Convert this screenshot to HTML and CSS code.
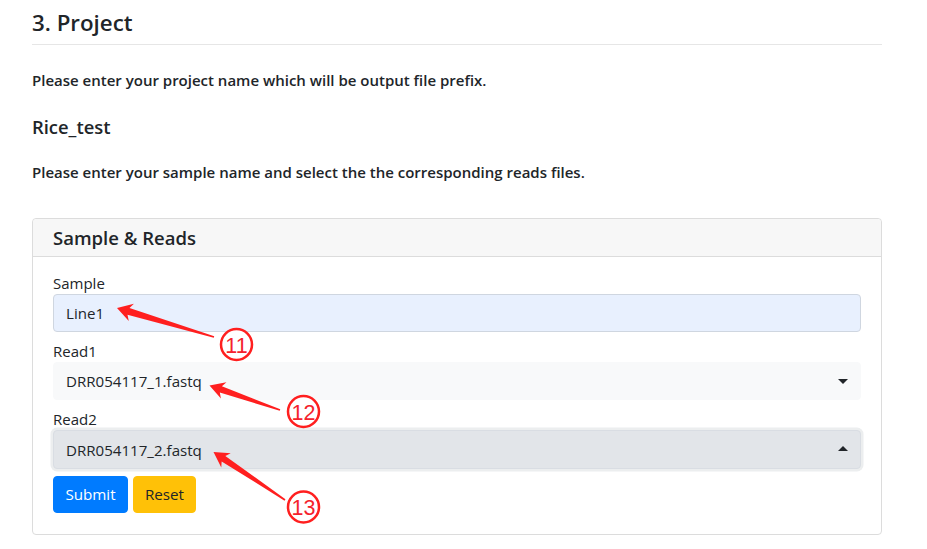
FILE: index.html
```html
<!DOCTYPE html>
<html lang="en">
<head>
<meta charset="utf-8">
<title>Project</title>
<link rel="stylesheet" href="styles.css">
</head>
<body>
<div class="page">
  <h3 class="section-title">3. Project</h3>
  <p class="note">Please enter your project name which will be output file prefix.</p>
  <h5 class="project-name">Rice_test</h5>
  <p class="note note-2">Please enter your sample name and select the the corresponding reads files.</p>

  <div class="card">
    <div class="card-header">Sample &amp; Reads</div>
    <form class="card-body">
      <label class="field-label" for="sample">Sample</label>
      <input class="input autofill" id="sample" type="text" value="Line1">

      <label class="field-label" for="read1">Read1</label>
      <div class="select-wrap">
        <select class="select" id="read1"><option>DRR054117_1.fastq</option></select>
        <span class="caret caret-down"></span>
      </div>

      <label class="field-label" for="read2">Read2</label>
      <div class="select-wrap focused">
        <select class="select select-open" id="read2"><option>DRR054117_2.fastq</option></select>
        <span class="caret caret-up"></span>
      </div>

      <div class="actions">
        <button type="button" class="btn btn-primary">Submit</button>
        <button type="button" class="btn btn-warning">Reset</button>
      </div>
    </form>
  </div>
</div>

<svg class="annotations" width="927" height="549" viewBox="0 0 927 549" xmlns="http://www.w3.org/2000/svg">
  <g fill="#ff1f1f">
    <polygon points="214.23,336.23 129.50,308.09 133.95,303.68 117,308 128.79,320.92 127.50,314.79 213.77,337.77"/>
    <polygon points="280.26,409.24 221.89,386.37 226.45,382.34 209.5,385.5 220.93,398.42 219.81,392.43 279.74,410.76"/>
    <polygon points="285.44,499.33 225.32,455.90 230.70,453.23 213.5,452 221.28,467.39 221.66,461.40 284.56,500.67"/>
  </g>
  <g fill="#ffffff" stroke="#ff1f1f" stroke-width="2.5">
    <circle cx="236.5" cy="344.5" r="15.5"/>
    <circle cx="303.5" cy="411.5" r="15.5"/>
    <circle cx="303.5" cy="507" r="15.5"/>
  </g>
  <g class="num" fill="#f5222d" text-anchor="middle">
    <text x="236.5" y="352.5">11</text>
    <text x="303.5" y="419.5">12</text>
    <text x="303.5" y="515">13</text>
  </g>
</svg>
</body>
</html>
```

FILE: styles.css
```css
* { box-sizing: border-box; }

html, body {
  margin: 0;
  padding: 0;
  background: #ffffff;
}

body {
  font-family: "Open Sans", "Noto Sans", sans-serif;
  color: #212529;
  width: 927px;
  height: 549px;
  overflow: hidden;
  position: relative;
}

.page {
  width: 850px;
  margin-left: 32px;
  padding-top: 6px;
}

.section-title {
  margin: 0;
  font-size: 22.3px;
  font-weight: 600;
  line-height: 34px;
  padding-bottom: 4px;
  border-bottom: 1px solid #e6e6e6;
}

.note {
  margin: 23px 0 0 0;
  font-size: 15px;
  font-weight: 600;
  line-height: 24px;
}

.project-name {
  margin: 21px 0 0 0;
  font-size: 18.4px;
  font-weight: 600;
  line-height: 28px;
}

.note-2 { margin-top: 19px; }

.card {
  margin-top: 34px;
  border: 1px solid #dcdcdc;
  border-radius: 4px;
  width: 850px;
}

.card-header {
  height: 38px;
  background: #f7f7f7;
  border-bottom: 1px solid #dcdcdc;
  padding: 0 20px;
  font-size: 18.5px;
  font-weight: 600;
  line-height: 38px;
  border-radius: 4px 4px 0 0;
}

.card-body {
  display: flex;
  flex-direction: column;
  padding: 15px 20px 21px 20px;
}

.field-label {
  font-size: 15px;
  line-height: 22px;
  height: 22px;
}

.input,
.select {
  display: block;
  width: 808px;
  height: 38px;
  font-family: inherit;
  font-size: 15.1px;
  color: #212529;
  padding: 0 12px;
  border-radius: 4px;
  outline: none;
  margin: 0 0 8px 0;
}

.input.autofill {
  background: #e8f0fe;
  border: 1px solid #cfd6e0;
}

.select-wrap {
  position: relative;
  width: 808px;
}

.select {
  -webkit-appearance: none;
  appearance: none;
  background: #f8f9fa;
  border: 1px solid #f8f9fa;
}

.focused .select {
  background: #e2e5e9;
  border: 1px solid #d9dde3;
  box-shadow: 0 0 0 2.5px #eceeef;
  height: 39px;
  margin-bottom: 7px;
}

.caret {
  position: absolute;
  right: 13px;
  width: 0;
  height: 0;
  border-left: 5px solid transparent;
  border-right: 5px solid transparent;
  pointer-events: none;
}

.caret-down {
  top: 17px;
  border-top: 5px solid #212529;
}

.caret-up {
  top: 16px;
  border-bottom: 5px solid #212529;
}

.actions {
  display: flex;
  gap: 5px;
}

.btn {
  height: 37px;
  border-radius: 4px;
  border: 1px solid transparent;
  font-family: inherit;
  font-size: 15.2px;
  line-height: 35px;
  padding: 0;
  cursor: pointer;
}

.btn-primary {
  width: 75px;
  background: #007bff;
  border-color: #007bff;
  color: #ffffff;
}

.btn-warning {
  width: 63px;
  background: #ffc107;
  border-color: #ffc107;
  color: #212529;
}

.annotations {
  position: absolute;
  left: 0;
  top: 0;
  pointer-events: none;
}

.num text {
  font-family: "Liberation Sans", "DejaVu Sans", sans-serif;
  font-size: 21.5px;
}
```
